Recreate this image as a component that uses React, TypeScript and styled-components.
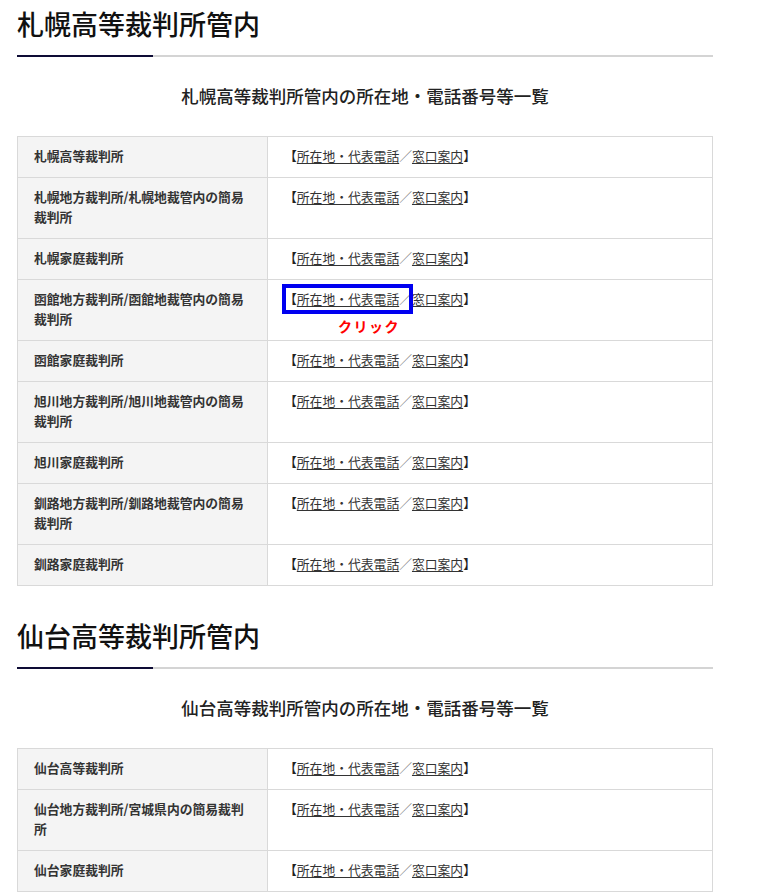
import styled, { createGlobalStyle } from 'styled-components'

// -- Global --
const GlobalStyle = createGlobalStyle`
  body {
    margin: 0;
    background-color: #ffffff;
    color: #222222;
    font-family: "Noto Sans CJK JP", "Noto Sans", sans-serif;
  }
`

// -- Styled Components --
const Page = styled.main`
  width: 696px;
  padding: 4px 0 0 17px;
`

const Section = styled.section`
  margin-bottom: 30px;
`

const Heading = styled.h2`
  margin: 0 0 11px;
  font-size: 27px;
  font-weight: 500;
  line-height: 40px;
  color: #111111;
`

const HeadingRule = styled.div`
  height: 2px;
  background: linear-gradient(to right, #0e0c35 136px, #d4d4d4 136px);
`

const Caption = styled.p`
  margin: 26px 0 27px;
  text-align: center;
  font-size: 17.5px;
  font-weight: 500;
  line-height: 26px;
  color: #222222;
`

const Table = styled.table`
  width: 100%;
  border-collapse: collapse;
  font-size: 12.8px;
  line-height: 20px;
`

const NameCell = styled.th`
  width: 217px;
  padding: 9px 16px 11px;
  background-color: #f4f4f4;
  border: 1px solid #d9d9d9;
  text-align: left;
  vertical-align: top;
  font-weight: 700;
  color: #333333;
`

const LinkCell = styled.td`
  padding: 9px 16px 11px;
  border: 1px solid #d9d9d9;
  vertical-align: top;
  color: #222222;
`

const LinkLine = styled.span`
  position: relative;
  display: inline-block;
`

const Link = styled.a`
  color: #333333;
  text-decoration: underline;
  text-underline-offset: 2px;
`

const Slash = styled.span`
  color: #777777;
`

const Highlight = styled.span`
  position: absolute;
  top: -5px;
  left: -2px;
  width: 131px;
  height: 30px;
  box-sizing: border-box;
  border: 4px solid #0000f0;
`

const ClickNote = styled.span`
  position: absolute;
  top: 29px;
  left: 54px;
  font-size: 14px;
  font-weight: 700;
  letter-spacing: 1.5px;
  line-height: 16px;
  color: #ff0000;
  white-space: nowrap;
`

// -- Data --
type Court = {
  name: string
  note?: boolean
}

type Region = {
  title: string
  courts: Court[]
}

const regions: Region[] = [
  {
    title: '札幌高等裁判所管内',
    courts: [
      { name: '札幌高等裁判所' },
      { name: '札幌地方裁判所/札幌地裁管内の簡易裁判所' },
      { name: '札幌家庭裁判所' },
      { name: '函館地方裁判所/函館地裁管内の簡易裁判所', note: true },
      { name: '函館家庭裁判所' },
      { name: '旭川地方裁判所/旭川地裁管内の簡易裁判所' },
      { name: '旭川家庭裁判所' },
      { name: '釧路地方裁判所/釧路地裁管内の簡易裁判所' },
      { name: '釧路家庭裁判所' },
    ],
  },
  {
    title: '仙台高等裁判所管内',
    courts: [
      { name: '仙台高等裁判所' },
      { name: '仙台地方裁判所/宮城県内の簡易裁判所' },
      { name: '仙台家庭裁判所' },
    ],
  },
]

// -- Componente --
const App = () => {
  return (
    <Page>
      <GlobalStyle />
      {regions.map((region) => (
        <Section key={region.title}>
          <Heading>{region.title}</Heading>
          <HeadingRule />
          <Caption>{region.title}の所在地・電話番号等一覧</Caption>
          <Table>
            <tbody>
              {region.courts.map((court) => (
                <tr key={court.name}>
                  <NameCell>{court.name}</NameCell>
                  <LinkCell>
                    <LinkLine>
                      【<Link href="#">所在地・代表電話</Link>
                      <Slash>／</Slash>
                      <Link href="#">窓口案内</Link>】
                      {court.note && (
                        <>
                          <Highlight />
                          <ClickNote>クリック</ClickNote>
                        </>
                      )}
                    </LinkLine>
                  </LinkCell>
                </tr>
              ))}
            </tbody>
          </Table>
        </Section>
      ))}
    </Page>
  )
}

export default App
